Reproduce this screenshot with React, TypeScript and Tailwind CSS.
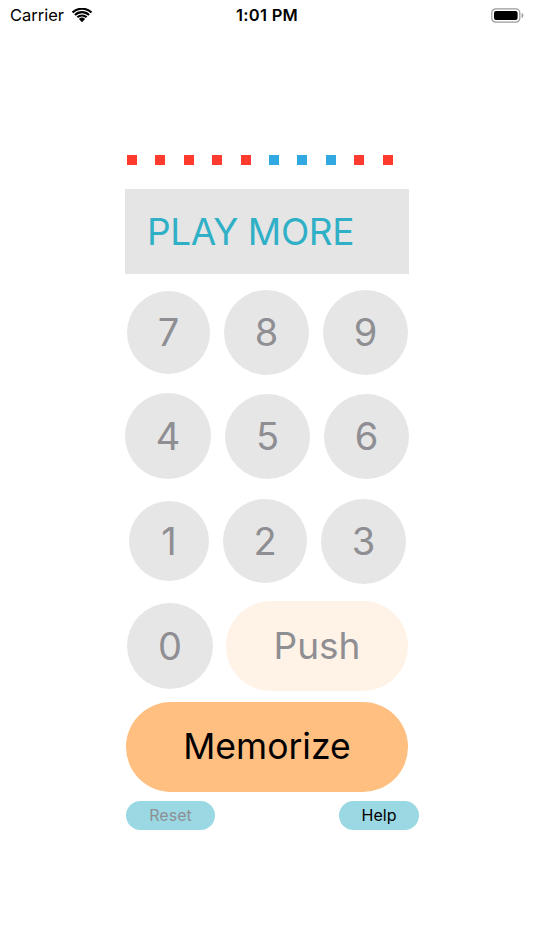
import React from "react";

const font = { fontFamily: "Inter, 'Noto Sans', sans-serif" };

function Wifi() {
  return (
    <svg width="20" height="15" viewBox="0 0 20 15">
      <path d="M10 14.2 L6.9 10.9 A4.5 4.5 0 0 1 13.1 10.9 Z" fill="#000" />
      <path d="M4.6 8.6 A7.8 7.8 0 0 1 15.4 8.6 L13.9 10.1 A5.7 5.7 0 0 0 6.1 10.1 Z" fill="#000" />
      <path d="M2.2 6.2 A11.2 11.2 0 0 1 17.8 6.2 L16.3 7.7 A9.1 9.1 0 0 0 3.7 7.7 Z" fill="#000" />
      <path d="M-0.2 3.8 A14.6 14.6 0 0 1 20.2 3.8 L18.7 5.3 A12.5 12.5 0 0 0 1.3 5.3 Z" fill="#000" />
    </svg>
  );
}

function Battery() {
  return (
    <svg width="33" height="15" viewBox="0 0 33 15">
      <rect x="0.8" y="0.8" width="28" height="13.4" rx="4" fill="none" stroke="#9a9a9a" strokeWidth="1.2" />
      <rect x="3" y="3" width="23.6" height="9" rx="2" fill="#000" />
      <path d="M30.6 5 Q32.4 5.4 32.4 7.5 Q32.4 9.6 30.6 10 Z" fill="#9a9a9a" />
    </svg>
  );
}

function Circle({ d, label, ml = 0 }: { d: number; label: string; ml?: number }) {
  return (
    <div
      className="flex items-center justify-center rounded-full bg-[#e6e6e6] text-[38px] text-[#8e8e93] leading-none shrink-0"
      style={{ width: d, height: d, marginLeft: ml }}
    >
      {label}
    </div>
  );
}

export default function App() {
  const dots = ["r", "r", "r", "r", "r", "b", "b", "b", "r", "r"];
  return (
    <div className="w-[534px] h-[950px] bg-white relative overflow-hidden" style={font}>
      {/* status bar */}
      <div className="h-[30px] flex items-center justify-between px-[10px] relative">
        <div className="flex items-center gap-[8px]">
          <span className="text-[16.5px] text-black">Carrier</span>
          <Wifi />
        </div>
        <span className="absolute left-1/2 -translate-x-1/2 text-[16.5px] font-semibold text-black tracking-[0.3px]">1:01 PM</span>
        <div>
          <Battery />
        </div>
      </div>

      <div className="pl-[125px] flex flex-col">
        {/* dots */}
        <div className="mt-[125px] ml-[2px] flex gap-[18.4px] h-[10px]">
          {dots.map((c, i) => (
            <div key={i} className={c === "r" ? "w-[10px] h-[10px] bg-[#ff3b30]" : "w-[10px] h-[10px] bg-[#30a9e3]"} />
          ))}
        </div>

        {/* box */}
        <div className="mt-[24px] w-[284px] h-[85px] bg-[#e5e5e5] flex items-center pl-[22px]">
          <span className="text-[37px] text-[#30b0c7] leading-none tracking-[-0.4px]">PLAY MORE</span>
        </div>

        {/* row 1 */}
        <div className="mt-[13px] h-[90px] flex items-center gap-[14px]">
          <Circle d={83} label="7" ml={2} />
          <Circle d={85} label="8" />
          <Circle d={85} label="9" />
        </div>
        {/* row 2 */}
        <div className="mt-[14px] h-[90px] flex items-center gap-[14px]">
          <Circle d={86} label="4" />
          <Circle d={85} label="5" />
          <Circle d={85} label="6" />
        </div>
        {/* row 3 */}
        <div className="mt-[15px] h-[90px] flex items-center gap-[14px]">
          <Circle d={80} label="1" ml={4} />
          <Circle d={84} label="2" />
          <Circle d={85} label="3" />
        </div>
        {/* row 4 */}
        <div className="mt-[14.5px] h-[90px] flex items-center gap-[13px]">
          <Circle d={86} label="0" ml={2} />
          <div className="w-[182px] h-[90px] rounded-full bg-[#fff2e6] flex items-center justify-center text-[37px] text-[#8e8e93] leading-none">
            Push
          </div>
        </div>

        {/* memorize */}
        <div className="mt-[11px] ml-[1px] w-[282px] h-[90px] rounded-full bg-[#ffbf80] flex items-center justify-center text-[35.5px] text-black leading-none">
          Memorize
        </div>

        {/* reset / help */}
        <div className="mt-[9px] ml-[1px] w-[293px] flex justify-between">
          <div className="w-[89px] h-[29px] rounded-full bg-[#9ad9e3] flex items-center justify-center text-[16px] text-[#8e8e93]">
            Reset
          </div>
          <div className="w-[80px] h-[29px] rounded-full bg-[#9ad9e3] flex items-center justify-center text-[16px] text-black">
            Help
          </div>
        </div>
      </div>
    </div>
  );
}
